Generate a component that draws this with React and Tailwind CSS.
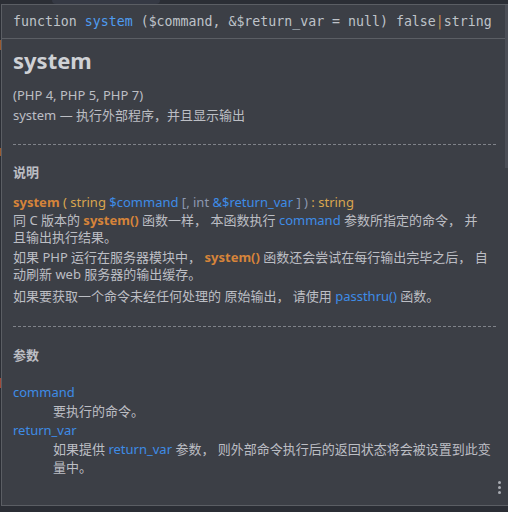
export default function App() {
  const body = "font-['Noto_Sans','Noto_Sans_CJK_SC',sans-serif]";
  return (
    <div className="w-[508px] h-[512px] bg-[#2b2e35] overflow-hidden relative">
      <div className="h-[4px] flex">
        <div className="w-[52px]" />
        <div className="w-[108px] bg-[#353944] rounded-b" />
      </div>
      <div className="absolute left-0 top-[40px] w-[1px] h-[10px] bg-[#9a5a30]" />
      <div className="absolute left-0 top-[148px] w-[1px] h-[8px] bg-[#9a5a30]" />
      <div className="absolute left-0 top-[378px] w-[1px] h-[10px] bg-[#a04a3a]" />

      <div className="ml-[1px] w-[507px] h-[502px] bg-[#3c3f46] border border-r-0 border-[#5b5e64] flex relative">
        <div className="flex-1 flex flex-col min-w-0">
          <div className="h-[34px] shrink-0 border-b border-[#5b5e64] flex items-center pl-[11px] font-['DejaVu_Sans_Mono',monospace] text-[13.25px] text-[#bfc3c9] whitespace-pre">
            <span>function </span>
            <span className="text-[#4f9cf0]">system</span>
            <span> ($command, &$return_var = null) false</span>
            <span className="text-[#c8904e]">|</span>
            <span>string</span>
          </div>

          <div className={`flex-1 pl-[11px] pr-[9px] text-[13px] text-[#bcbec4] ${body}`}>
            <h1 className="mt-[6px] text-[22px] font-bold leading-[30px] text-[#cfd1d5]">system</h1>
            <p className="mt-[10px] leading-[20px]">(PHP 4, PHP 5, PHP 7)</p>
            <p className="leading-[20px]">system — 执行外部程序，并且显示输出</p>

            <div className="mt-[19px] border-t border-dashed border-[#80838a]" />

            <h2 className="mt-[17px] font-bold leading-[20px]">说明</h2>

            <p className="mt-[11px] leading-[18px]">
              <span className="font-bold text-[#d6843a]">system</span>
              <span className="text-[#d9a64f]"> ( string </span>
              <span className="text-[#3e8ce6]">$command</span>
              <span className="text-[#8d99b0]"> [, int </span>
              <span className="text-[#3e8ce6]">&$return_var</span>
              <span className="text-[#8d99b0]"> ] ) </span>
              <span className="text-[#d9a64f]">: string</span>
            </p>
            <p className="mt-[1px] leading-[17px] whitespace-nowrap">
              同 C 版本的 <span className="font-bold text-[#d6843a]">system()</span> 函数一样， 本函数执行{" "}
              <span className="text-[#3e8ce6]">command</span> 参数所指定的命令， 并
              <br />
              且输出执行结果。
            </p>
            <p className="mt-[3px] leading-[17px] whitespace-nowrap">
              如果 PHP 运行在服务器模块中， <span className="font-bold text-[#d6843a]">system()</span>{" "}
              函数还会尝试在每行输出完毕之后， 自
              <br />
              动刷新 web 服务器的输出缓存。
            </p>
            <p className="mt-[5px] leading-[17px]">
              如果要获取一个命令未经任何处理的 原始输出， 请使用{" "}
              <span className="text-[#3e8ce6]">passthru()</span> 函数。
            </p>

            <div className="mt-[21px] border-t border-dashed border-[#80838a]" />

            <h2 className="mt-[18px] font-bold leading-[20px]">参数</h2>

            <div className="mt-[18px] leading-[19px]">
              <div className="text-[#3e8ce6]">command</div>
              <div className="pl-[40px]">要执行的命令。</div>
              <div className="text-[#3e8ce6]">return_var</div>
              <div className="pl-[40px] leading-[18px] whitespace-nowrap">
                如果提供 <span className="text-[#3e8ce6]">return_var</span> 参数， 则外部命令执行后的返回状态将会被设置到此变
                <br />
                量中。
              </div>
            </div>
          </div>
        </div>
        <div className="w-[3px] shrink-0 flex flex-col">
          <div className="h-[163px] bg-[#4b4e56]" />
        </div>
        <div className="absolute right-[7px] bottom-[11px] flex flex-col gap-[2px]">
          <div className="w-[3px] h-[3px] rounded-full bg-[#a9acb2]" />
          <div className="w-[3px] h-[3px] rounded-full bg-[#a9acb2]" />
          <div className="w-[3px] h-[3px] rounded-full bg-[#a9acb2]" />
        </div>
      </div>
    </div>
  );
}
